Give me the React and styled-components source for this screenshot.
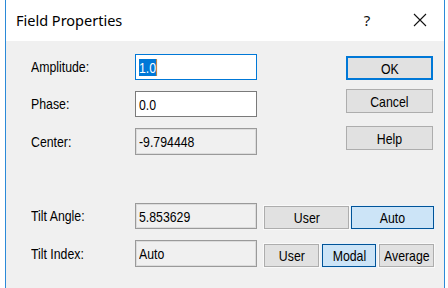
import React from 'react';
import styled, { createGlobalStyle } from 'styled-components';

const GlobalStyle = createGlobalStyle`
  html, body {
    margin: 0;
    padding: 0;
    background: #ffffff;
  }
  body {
    font-family: "Liberation Sans", Arial, sans-serif;
  }
`;

const Page = styled.div`
  width: 448px;
  height: 288px;
  padding: 0 3px 0 5px;
  box-sizing: border-box;
  background: #ffffff;
  overflow: hidden;
`;

const Window = styled.div`
  height: 100%;
  display: flex;
  flex-direction: column;
  border-left: 1px solid #2b8ad8;
  border-right: 1px solid #2b8ad8;
  background: #f0f0f0;
`;

const TitleBar = styled.div`
  height: 41px;
  flex: none;
  display: flex;
  align-items: center;
  background: #ffffff;
  padding: 0 0 2px 10px;
  box-sizing: border-box;
`;

const Title = styled.div`
  flex: 1;
  font-family: "Noto Sans", "Open Sans", sans-serif;
  font-size: 14.5px;
  color: #000;
`;

const TitleButton = styled.div`
  width: ${({ $w }) => $w}px;
  margin-right: ${({ $mr }) => $mr || 0}px;
  font-family: "Noto Sans", sans-serif;
  font-size: 15px;
  color: #111;
  display: flex;
  justify-content: center;
`;

// the dialog font is a tall, narrow sans; squeeze Liberation Sans to match
const Narrow = styled.span`
  display: inline-block;
  font-size: 15px;
  white-space: nowrap;
  transform: scaleX(0.82);
  transform-origin: ${({ $center }) => ($center ? 'center' : 'left')} center;
`;

const Body = styled.div`
  flex: 1;
  padding: 13px 0 0 25px;
  display: flex;
  flex-direction: column;
`;

const TopArea = styled.div`
  display: flex;
  height: 101px;
`;

const FieldColumn = styled.div`
  display: flex;
  flex-direction: column;
  gap: 11px;
`;

const Row = styled.div`
  display: flex;
  align-items: center;
  height: ${({ $h }) => $h || 26}px;
`;

const Label = styled.div`
  width: 104px;
  color: #000;
`;

const Box = styled.div`
  width: 122px;
  height: 100%;
  box-sizing: border-box;
  display: flex;
  align-items: center;
  padding-left: 3px;
  color: #000;
  background: ${({ $readonly }) => ($readonly ? '#f0f0f0' : '#ffffff')};
  border: 1px solid ${({ $focused, $readonly }) => ($focused ? '#0078d7' : $readonly ? '#9a9a9a' : '#7a7a7a')};
  box-shadow: ${({ $readonly }) => ($readonly ? 'inset 0 0 0 1px #dcdcdc' : 'none')};
`;

const Selected = styled.span`
  background: #0078d7;
  color: #ffffff;
  border-right: 1px solid #f28a1d;
`;

const ButtonColumn = styled.div`
  margin-left: 89px;
  padding-top: 2px;
  display: flex;
  flex-direction: column;
  gap: 9px;
`;

const DialogButton = styled.div`
  width: 87px;
  height: 24px;
  box-sizing: border-box;
  display: flex;
  align-items: center;
  justify-content: center;
  color: #000;
  background: #e1e1e1;
  border: ${({ $default }) => ($default ? '2px solid #0078d7' : '1px solid #adadad')};
  margin-top: ${({ $gap }) => $gap || 0}px;
`;

const Spacer = styled.div`
  height: 48px;
`;

const BottomArea = styled.div`
  display: flex;
  flex-direction: column;
  gap: 11px;
`;

const ToggleGroup = styled.div`
  display: flex;
  gap: ${({ $gap }) => $gap}px;
  margin-left: 7px;
  margin-top: ${({ $top }) => $top || 0}px;
  height: 23px;
`;

const Toggle = styled.div`
  width: ${({ $w }) => $w}px;
  height: 23px;
  box-sizing: border-box;
  display: flex;
  align-items: center;
  justify-content: center;
  color: #000;
  background: ${({ $active }) => ($active ? '#cce4f7' : '#e1e1e1')};
  border: 1px solid ${({ $active }) => ($active ? '#005499' : '#adadad')};
  box-shadow: 0 0 0 1px ${({ $active }) => ($active ? '#e8f1fa' : '#f9f9f9')};
`;

const CloseIcon = () => (
  <svg width="14" height="14" viewBox="0 0 14 14">
    <path d="M1 1 L13 13 M13 1 L1 13" stroke="#111" strokeWidth="1.1" fill="none" />
  </svg>
);

const Field = ({ label, height, children, ...box }) => (
  <Row $h={height}>
    <Label><Narrow>{label}</Narrow></Label>
    <Box {...box}><Narrow>{children}</Narrow></Box>
  </Row>
);

const App = () => {
  return (
    <Page>
      <GlobalStyle />
      <Window>
        <TitleBar>
          <Title>Field Properties</Title>
          <TitleButton $w={16} $mr={21}>?</TitleButton>
          <TitleButton $w={48}><CloseIcon /></TitleButton>
        </TitleBar>
        <Body>
          <TopArea>
            <FieldColumn>
              <Field label="Amplitude:" $focused><Selected>1.0</Selected></Field>
              <Field label="Phase:">0.0</Field>
              <Field label="Center:" height={27} $readonly>-9.794448</Field>
            </FieldColumn>
            <ButtonColumn>
              <DialogButton $default><Narrow $center>OK</Narrow></DialogButton>
              <DialogButton><Narrow $center>Cancel</Narrow></DialogButton>
              <DialogButton $gap={4}><Narrow $center>Help</Narrow></DialogButton>
            </ButtonColumn>
          </TopArea>
          <Spacer />
          <BottomArea>
            <Row>
              <Label><Narrow>Tilt Angle:</Narrow></Label>
              <Box $readonly><Narrow>5.853629</Narrow></Box>
              <ToggleGroup $top={2} $gap={2}>
                <Toggle $w={85}><Narrow $center>User</Narrow></Toggle>
                <Toggle $w={83} $active><Narrow $center>Auto</Narrow></Toggle>
              </ToggleGroup>
            </Row>
            <Row $h={27}>
              <Label><Narrow>Tilt Index:</Narrow></Label>
              <Box $readonly><Narrow>Auto</Narrow></Box>
              <ToggleGroup $top={3} $gap={3}>
                <Toggle $w={55}><Narrow $center>User</Narrow></Toggle>
                <Toggle $w={54} $active><Narrow $center>Modal</Narrow></Toggle>
                <Toggle $w={55}><Narrow $center>Average</Narrow></Toggle>
              </ToggleGroup>
            </Row>
          </BottomArea>
        </Body>
      </Window>
    </Page>
  );
};

export default App;
